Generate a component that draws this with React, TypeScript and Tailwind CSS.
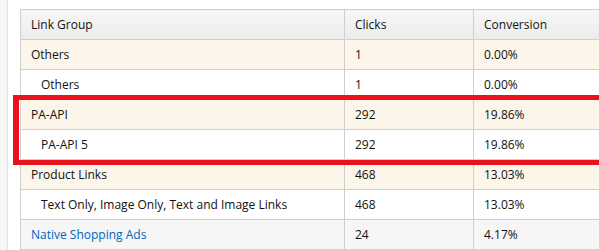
const rows = [
  { label: "Others", clicks: "1", conv: "0.00%", kind: "group" },
  { label: "Others", clicks: "1", conv: "0.00%", kind: "child" },
  { label: "PA-API", clicks: "292", conv: "19.86%", kind: "group" },
  { label: "PA-API 5", clicks: "292", conv: "19.86%", kind: "child" },
  { label: "Product Links", clicks: "468", conv: "13.03%", kind: "group" },
  { label: "Text Only, Image Only, Text and Image Links", clicks: "468", conv: "13.03%", kind: "child" },
  { label: "Native Shopping Ads", clicks: "24", conv: "4.17%", kind: "link" },
];

export default function App() {
  return (
    <div className="w-[599px] h-[250px] overflow-hidden bg-[#f7f7f7] pl-[7px] font-['Open_Sans','Noto_Sans',sans-serif] text-[12px] text-[#111]">
      <div className="relative h-full border-l border-[#e3e3e3] bg-white pl-[12px] pt-[9px]">
        <div className="w-[640px] border-l border-t border-[#cfcfcf]">
          {/* header */}
          <div className="grid grid-cols-[323px_129px_1fr] h-[30px] border-b border-[#cfcfcf] bg-gradient-to-b from-[#f7f7f7] to-[#ececec]">
            <div className="flex items-center pl-[10px] pt-px">Link Group</div>
            <div className="flex items-center pl-[10px] pt-px border-l border-[#cfcfcf]">Clicks</div>
            <div className="flex items-center pl-[10px] pt-px border-l border-[#cfcfcf]">Conversion</div>
          </div>
          {rows.map((r, i) => (
            <div
              key={i}
              className={
                "grid grid-cols-[323px_129px_1fr] h-[30px] border-b border-[#cfcfcf] " +
                (r.kind === "group" ? "bg-[#fcf5e9]" : r.kind === "link" ? "bg-[#f6f6f6]" : "bg-white")
              }
            >
              <div
                className={
                  "flex items-center pt-px " +
                  (r.kind === "child" ? "pl-[20px]" : "pl-[10px]") +
                  (r.kind === "link" ? " text-[#0066c0]" : "")
                }
              >
                {r.label}
              </div>
              <div className="flex items-center pl-[10px] pt-px border-l border-[#cfcfcf]">{r.clicks}</div>
              <div className="flex items-center pl-[10px] pt-px border-l border-[#cfcfcf]">{r.conv}</div>
            </div>
          ))}
        </div>

        {/* highlight box */}
        <div className="absolute left-[5px] top-[95px] w-[640px] h-[70px] border-l-[6px] border-y-[5px] border-[#e8131c]" />
      </div>
    </div>
  );
}
